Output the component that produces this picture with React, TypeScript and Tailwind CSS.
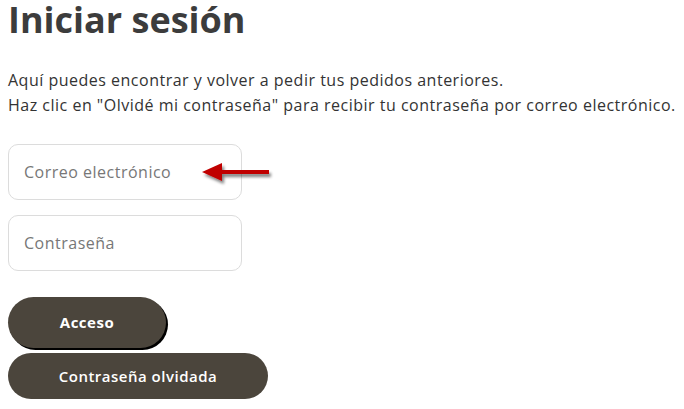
import React from "react";

export default function App() {
  return (
    <div className="w-[684px] h-[409px] bg-white overflow-hidden px-2 text-[#333]" style={{ fontFamily: '"Open Sans", "Noto Sans", sans-serif' }}>
      <h1 className="text-[36px] leading-[38px] font-bold text-[#3c3c3c] pt-[1px]">Iniciar sesión</h1>
      <div className="mt-[29px] text-[16px] leading-[25px] text-[#333] tracking-[0.5px]">
        <p>Aquí puedes encontrar y volver a pedir tus pedidos anteriores.</p>
        <p>Haz clic en "Olvidé mi contraseña" para recibir tu contraseña por correo electrónico.</p>
      </div>
      <div className="mt-[26px] flex flex-col gap-[15px] w-[234px]">
        <div className="relative">
          <input
            className="w-full h-[56px] rounded-[10px] border border-[#dcdcdc] px-[15px] text-[16px] tracking-[0.5px] placeholder:text-[#777] outline-none"
            placeholder="Correo electrónico"
          />
          <svg className="absolute left-[184px] top-[16px]" width="84" height="30" viewBox="0 0 84 30">
            <defs>
              <filter id="sh" x="-20%" y="-50%" width="150%" height="200%">
                <feGaussianBlur in="SourceAlpha" stdDeviation="1.5" />
                <feOffset dx="2" dy="3" result="b" />
                <feComponentTransfer><feFuncA type="linear" slope="0.5" /></feComponentTransfer>
                <feMerge><feMergeNode /><feMergeNode in="SourceGraphic" /></feMerge>
              </filter>
            </defs>
            <g filter="url(#sh)">
              <polygon points="10,12 30,3 30,21" fill="#c00000" />
              <rect x="29" y="10" width="48" height="4" fill="#c00000" />
            </g>
          </svg>
        </div>
        <input
          className="w-full h-[56px] rounded-[10px] border border-[#dcdcdc] px-[15px] text-[16px] tracking-[0.5px] placeholder:text-[#777] outline-none"
          placeholder="Contraseña"
        />
      </div>
      <div className="mt-[26px] flex flex-col items-start gap-[5px]">
        <button className="w-[158px] h-[51px] rounded-full bg-[#4b453c] text-white text-[15px] tracking-[0.5px] font-bold shadow-[2px_2px_0_#000]">Acceso</button>
        <button className="w-[260px] h-[46px] rounded-full bg-[#4b453c] text-white text-[15px] tracking-[0.5px] font-semibold">Contraseña olvidada</button>
      </div>
    </div>
  );
}
